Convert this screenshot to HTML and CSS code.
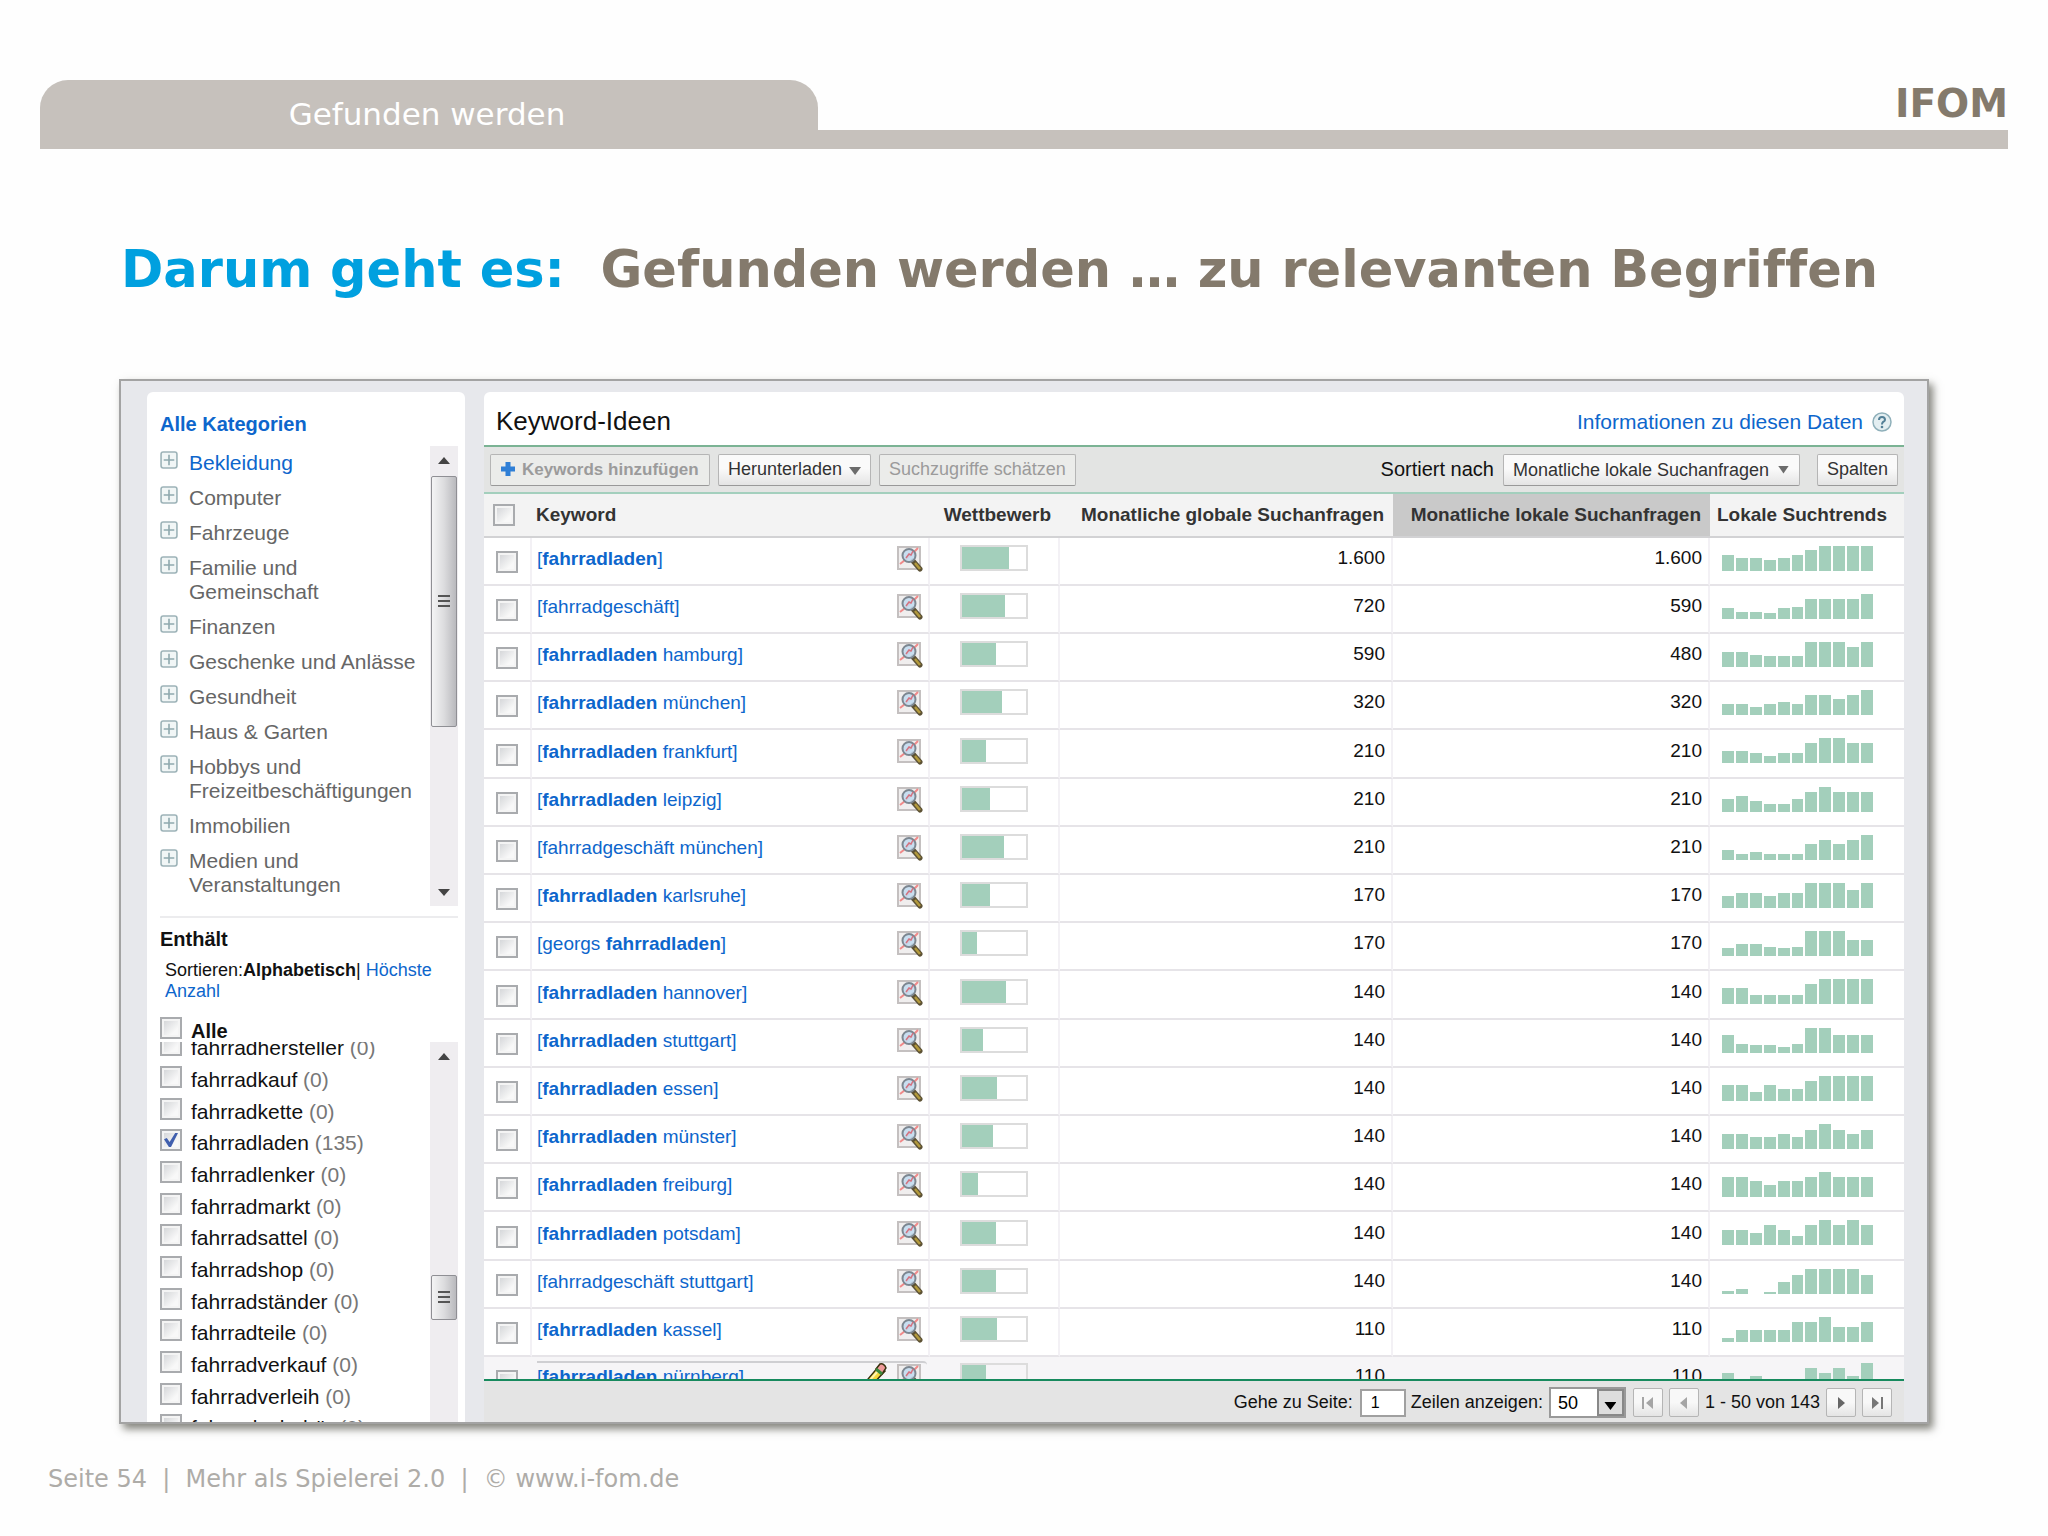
FILE: index.html
```html
<!DOCTYPE html>
<html lang="de">
<head>
    <meta charset="UTF-8">
    <meta name="viewport" content="width=device-width, initial-scale=1.0">
    <title>Gefunden werden</title>
    <link rel="stylesheet" href="styles.css">
</head>
<body>
    <!-- Icons -->
    <svg class="hidden" aria-hidden="true">
        <symbol id="plusBox" viewBox="0 0 17 17">
            <rect x="1" y="1" width="15" height="15" rx="2" fill="#f1f6f6" stroke="#9db3b8" stroke-width="1.5"/>
            <path d="M8.5 3.5v10M3.5 8.5h10" stroke="#8fa9ae" stroke-width="1.5"/>
        </symbol>
        <symbol id="magnifier" viewBox="0 0 26 26">
            <rect x="1" y="1" width="22" height="22" fill="#f0eeee" stroke="#c4c0c0" stroke-width="2"/>
            <path d="M3 18L8 14L14 9L21 2" fill="none" stroke="#f08a8a" stroke-width="2"/>
            <path d="M16 15l7 8" stroke="#5d5235" stroke-width="5" stroke-linecap="round"/>
            <path d="M18 17l5 6" stroke="#b39a3c" stroke-width="2.5"/>
            <circle cx="12" cy="9.5" r="6.5" fill="#c3dbf0" fill-opacity="0.9" stroke="#7d8791" stroke-width="2"/>
            <path d="M9 12l3-4 2 1 2-4" fill="none" stroke="#d4727f" stroke-width="1.5"/>
        </symbol>
        <symbol id="pencil" viewBox="0 0 22 24">
            <path d="M1 23L3 16L14 3L20 8L8 21z" fill="#f6d93c" stroke="#3a3110" stroke-width="1.5"/>
            <path d="M5 17l8-9" stroke="#fff6b0" stroke-width="2"/>
            <path d="M11 6L15 1Q19 0 21 5L17 11z" fill="#ef9a9a" stroke="#3a3110" stroke-width="1.5"/>
            <path d="M11 6l6 5" stroke="#3c8a3e" stroke-width="3"/>
        </symbol>
    </svg>

    <header class="header">
        <div class="tab">Gefunden werden</div>
        <div class="logo">IFOM</div>
    </header>

    <main class="main">
        <h1 class="title"><span class="title-blue">Darum geht es:</span>  Gefunden werden … zu relevanten Begriffen</h1>

        <div class="frame">
            <!-- Linke Spalte -->
            <aside class="sidebar">
                <h2><a href="#">Alle Kategorien</a></h2>
                <div class="scroll-area">
                    <ul class="categories" id="categories"></ul>
                    <div class="scrollbar">
                        <span class="arrow-up"></span>
                        <span class="thumb thumb-long"><i></i></span>
                        <span class="spacer"></span>
                        <span class="arrow-down"></span>
                    </div>
                </div>
                <hr>
                <h2>Enthält</h2>
                <p class="sort">Sortieren:<b>Alphabetisch</b>| <a href="#">Höchste Anzahl</a></p>
                <label class="term term-all"><input type="checkbox"><b>Alle</b></label>
                <div class="scroll-area scroll-terms">
                    <ul class="terms" id="terms"></ul>
                    <div class="scrollbar">
                        <span class="arrow-up"></span>
                        <span class="spacer spacer-double"></span>
                        <span class="thumb thumb-short"><i></i></span>
                        <span class="spacer"></span>
                    </div>
                </div>
            </aside>

            <!-- Keyword-Tabelle -->
            <section class="ideas">
                <div class="ideas-head">
                    <h2>Keyword-Ideen</h2>
                    <a href="#">Informationen zu diesen Daten</a>
                    <svg class="help" viewBox="0 0 20 20" aria-hidden="true">
                        <circle cx="10" cy="10" r="9" fill="#e3eef1" stroke="#8fb0ba" stroke-width="1.5"/>
                        <path d="M7 8Q7 5 10 5T13 8Q13 9 11 10Q10 11 10 12.500" fill="none" stroke="#527f96" stroke-width="2"/>
                        <circle cx="10" cy="15" r="1.3" fill="#527f96"/>
                    </svg>
                </div>
                <div class="toolbar">
                    <button class="btn btn-off btn-add" disabled>
                        <svg class="plus" viewBox="0 0 14 14" aria-hidden="true"><path d="M7 0v14M0 7h14" stroke="#2f7fd6" stroke-width="5"/></svg>
                        Keywords hinzufügen
                    </button>
                    <button class="btn btn-menu">Herunterladen <span class="caret"></span></button>
                    <button class="btn btn-off" disabled>Suchzugriffe schätzen</button>
                    <label class="sort-label" for="sortBy">Sortiert nach</label>
                    <span class="select-wrap">
                        <select class="btn" id="sortBy">
                            <option>Monatliche lokale Suchanfragen</option>
                        </select>
                        <span class="caret"></span>
                    </span>
                    <button class="btn btn-columns">Spalten</button>
                </div>
                <div class="table-view">
                    <table>
                        <thead>
                            <tr>
                                <th class="col-check"><input type="checkbox" aria-label="Alle auswählen"></th>
                                <th class="col-keyword">Keyword</th>
                                <th class="col-comp">Wettbewerb</th>
                                <th class="col-global">Monatliche globale Suchanfragen</th>
                                <th class="col-local">Monatliche lokale Suchanfragen</th>
                                <th class="col-trend">Lokale Suchtrends</th>
                            </tr>
                        </thead>
                        <tbody id="keywords"></tbody>
                    </table>
                </div>
                <div class="pager">
                    <label for="page">Gehe zu Seite:</label>
                    <input type="text" id="page" value="1">
                    <label for="rows">Zeilen anzeigen:</label>
                    <span class="rows-wrap">
                        <select id="rows"><option>50</option></select>
                        <span class="rows-arrow"><span class="caret"></span></span>
                    </span>
                    <button class="btn-page" aria-label="Erste Seite" disabled><svg viewBox="0 0 16 14"><path d="M3 1v12" stroke="#a5a5a5" stroke-width="2"/><path d="M13 1v12L6 7z" fill="#a5a5a5"/></svg></button>
                    <button class="btn-page" aria-label="Vorherige Seite" disabled><svg viewBox="0 0 16 14"><path d="M11 1v12L4 7z" fill="#a5a5a5"/></svg></button>
                    <span class="range">1 - 50 von 143</span>
                    <button class="btn-page" aria-label="Nächste Seite"><svg viewBox="0 0 16 14"><path d="M5 1v12l7-6z" fill="#666"/></svg></button>
                    <button class="btn-page" aria-label="Letzte Seite"><svg viewBox="0 0 16 14"><path d="M3 1v12l7-6z" fill="#777"/><path d="M13 1v12" stroke="#777" stroke-width="2"/></svg></button>
                </div>
            </section>
        </div>
    </main>

    <footer class="footer">Seite 54  |  Mehr als Spielerei 2.0  |  © www.i-fom.de</footer>

    <script src="script.js"></script>
</body>
</html>
```

FILE: styles.css
```css
* {
    box-sizing: border-box;
}
body {
    margin: 0;
    background-color: #fefefe;
    color: #111;
    font-family: "Liberation Sans", Arial, sans-serif;
    font-size: 19px;
}
a {
    color: #0d66cc;
    text-decoration: none;
}
h1, h2, p, ul {
    margin: 0;
    padding: 0;
    list-style: none;
}
.hidden {
    display: none;
}

/* Kopfzeile */
.header {
    display: flex;
    justify-content: space-between;
    margin: 80px 40px 0;
    border-bottom: 19px solid #c6c1bc;
}
.tab {
    width: 778px;
    height: 50px;
    padding-top: 14px;
    padding-right: 4px;
    border-radius: 28px 28px 0 0;
    background-color: #c6c1bc;
    color: #fff;
    font: 31px/40px "DejaVu Sans", Verdana, sans-serif;
    text-align: center;
}
.logo {
    color: #847a6c;
    font: bold 39px/48px "DejaVu Sans", Verdana, sans-serif;
}
.title {
    margin: 89px 0 77px;
    padding-left: 2px;
    color: #847a6c;
    font: bold 51px/64px "DejaVu Sans", Verdana, sans-serif;
    font-variant-ligatures: none;
    white-space: pre;
}
.title-blue {
    color: #00a0df;
}
.main {
    margin: 0 119px;
}

/* Rahmen */
.frame {
    display: flex;
    gap: 19px;
    padding: 11px 23px 0 26px;
    border: 2px solid #a3a3a3;
    background-color: #e7e8ec;
    box-shadow: 4px 5px 8px rgba(80, 80, 70, 0.7);
}
.sidebar {
    display: flex;
    flex-direction: column;
    width: 318px;
    padding: 20px 7px 0 13px;
    border-radius: 6px 6px 0 0;
    background-color: #fff;
}
.sidebar h2 {
    font-size: 20px;
    line-height: 25px;
}
.scroll-area {
    display: flex;
    justify-content: space-between;
    height: 460px;
    margin-top: 9px;
    overflow: hidden;
}
.categories {
    font-size: 21px;
    line-height: 24px;
}
.categories li {
    display: flex;
    gap: 11px;
    margin: 5px 0 11px;
}
.categories svg {
    flex: none;
    width: 18px;
    height: 18px;
}
.categories a {
    color: #666;
}
.categories li:first-child a {
    color: #0d66cc;
}
.scrollbar {
    display: flex;
    flex: none;
    flex-direction: column;
    align-items: center;
    width: 28px;
    background-color: #efedf0;
}
.arrow-up, .arrow-down {
    width: 12px;
    height: 7px;
    margin: 11px 0 12px;
    background-color: #444;
    clip-path: polygon(50% 0, 100% 100%, 0 100%);
}
.arrow-down {
    margin: 10px 0;
    clip-path: polygon(0 0, 100% 0, 50% 100%);
}
.spacer {
    flex: 1;
}
.spacer-double {
    flex: 2;
}
.thumb {
    display: flex;
    align-items: center;
    justify-content: center;
    width: 26px;
    border: 1px solid #8f8f94;
    border-radius: 2px;
    background: linear-gradient(to right, #f4f4f5, #dcdcde 50%, #b9b9bd);
}
.thumb i {
    width: 12px;
    height: 14px;
    background: repeating-linear-gradient(#555 0 2px, transparent 2px 5px);
}
.thumb-long {
    height: 251px;
}
.thumb-short {
    height: 45px;
}
.sidebar hr {
    width: 100%;
    height: 2px;
    margin: 10px 0 9px;
    border: 0;
    background-color: #ececee;
}
.sort {
    padding: 8px 20px 0 5px;
    font-size: 18px;
    line-height: 21px;
}
.term {
    display: flex;
    gap: 9px;
    height: 32px;
    font-size: 21px;
    line-height: 32px;
}
.term-all {
    height: 27px;
    margin-top: 13px;
    font-size: 20px;
}
.term span {
    color: #777;
}
.scroll-terms {
    flex: 1 1 0;
    margin-top: 0;
}
.terms {
    margin-top: -10px;
}
.terms li:nth-child(3n) .term {
    height: 31px;
}
input[type="checkbox"] {
    flex: none;
    width: 22px;
    height: 22px;
    margin: 2px 0 0;
    border: 2px solid #a9abae;
    background: linear-gradient(135deg, #cfd1d4, #f8f8f8 70%);
    box-shadow: inset 0 0 0 2px #f4f4f4;
    appearance: none;
}
input[type="checkbox"]:checked::before {
    content: "";
    display: block;
    width: 14px;
    height: 14px;
    margin: 2px;
    background-color: #405fae;
    clip-path: polygon(0 45%, 20% 35%, 40% 65%, 80% 0, 100% 0, 50% 100%, 35% 100%);
}

/* Keyword-Ideen */
.ideas {
    flex: 1;
    min-width: 0;
    border-radius: 6px 6px 0 0;
    background-color: #fff;
}
.ideas-head {
    display: flex;
    align-items: center;
    gap: 9px;
    height: 53px;
    padding: 6px 12px 0;
    font-size: 21px;
}
.ideas-head h2 {
    margin-right: auto;
    font-size: 26px;
    font-weight: normal;
}
.help {
    width: 20px;
    height: 20px;
}
.toolbar {
    display: flex;
    align-items: center;
    height: 49px;
    padding: 0 6px;
    border-top: 2px solid #7bb394;
    border-bottom: 2px solid #a3cfbd;
    background-color: #e3e4e3;
}
.btn {
    height: 32px;
    margin-right: 8px;
    padding: 0 9px;
    border: 1px solid #b5b5b5;
    border-bottom-color: #999;
    border-radius: 2px;
    background: linear-gradient(#fafafa 45%, #e4e4e4);
    color: #333;
    font-family: inherit;
    font-size: 18px;
    white-space: nowrap;
}
.btn-off {
    background: #ebecea;
    color: #9b9b9b;
}
.btn-add {
    width: 220px;
    font-size: 17px;
    font-weight: bold;
}
.plus {
    width: 14px;
    height: 14px;
    margin-right: 2px;
    vertical-align: -1px;
}
.caret {
    display: inline-block;
    width: 12px;
    height: 8px;
    background-color: #6c6c6c;
    clip-path: polygon(0 0, 100% 0, 50% 100%);
}
.btn-menu .caret {
    margin-left: 2px;
}
.sort-label {
    margin-left: auto;
    margin-right: 9px;
    font-size: 20px;
}
.select-wrap, .rows-wrap {
    position: relative;
}
.select-wrap select {
    width: 297px;
    margin-right: 17px;
    appearance: none;
}
.select-wrap .caret {
    position: absolute;
    top: 12px;
    right: 28px;
    width: 11px;
}
.btn-columns {
    margin-right: 0;
}

/* Tabelle */
.table-view {
    height: 885px;
    overflow: hidden;
}
table {
    width: 100%;
    border-collapse: separate;
    border-spacing: 0;
    table-layout: fixed;
}
th {
    height: 44px;
    padding: 0 9px;
    border-bottom: 2px solid #d2d2d4;
    background-color: #f3f3f3;
    color: #333;
    text-align: right;
    white-space: nowrap;
}
th.col-keyword {
    padding-left: 4px;
    text-align: left;
}
th.col-local {
    background-color: #c9c9c9;
}
th.col-trend {
    padding: 0 0 0 7px;
    text-align: left;
}
.col-check {
    width: 48px;
}
.col-comp {
    width: 130px;
}
.col-global {
    width: 333px;
}
.col-local {
    width: 317px;
}
.col-trend {
    width: 194px;
}
th.col-check input, td.check input {
    display: block;
    margin: 0;
}
td {
    height: 48px;
    padding: 0 6px 6px;
    border-right: 2px solid #f3f1f5;
    border-bottom: 2px solid #e6e4e8;
    background-color: #fff;
    text-align: right;
}
td:last-child {
    border-right: 0;
}
tr:nth-child(5n) td {
    height: 49px;
}
td.check {
    padding: 2px 12px 0;
}
td.keyword {
    padding: 0 5px 4px;
}
.keyword div {
    display: flex;
    align-items: center;
    justify-content: space-between;
}
.keyword svg {
    width: 26px;
    height: 26px;
}
.comp-box {
    width: 68px;
    height: 26px;
    margin-left: 24px;
    border: 2px solid #dcdcdc;
}
.comp-fill {
    height: 100%;
    background-color: #a3cfbb;
}
.trend {
    display: flex;
    align-items: flex-end;
    gap: 2px;
    width: 151px;
    height: 25px;
    margin-left: 6px;
}
.trend span {
    flex: 1;
    background-color: #a3cfbb;
}
.active td {
    padding-bottom: 9px;
    border-right-color: #f6f5f7;
    background-color: #f6f5f7;
}
.active td.check {
    padding-bottom: 0;
}
.active .keyword div {
    margin-right: -4px;
    padding-right: 4px;
    border-top: 2px solid #cfcfd2;
    border-radius: 0 4px 0 0;
}
.active .keyword .pencil {
    width: 22px;
    height: 24px;
    margin: 0 10px 4px auto;
}

/* Seitenauswahl */
.pager {
    display: flex;
    align-items: center;
    justify-content: flex-end;
    height: 43px;
    padding: 2px 12px 0;
    border-top: 2px solid #178a5e;
    background-color: #e4e4e4;
    font-size: 18px;
}
.pager input {
    width: 46px;
    height: 28px;
    margin: 0 5px 0 7px;
    padding: 0 9px;
    border: 2px solid #a0a0a0;
    background-color: #fff;
    font: 16px "Liberation Sans", Arial, sans-serif;
}
.rows-wrap select {
    width: 77px;
    height: 31px;
    margin: 0 7px 0 6px;
    padding: 0 7px;
    border: 2px solid #999;
    background-color: #fff;
    font: 18px "Liberation Sans", Arial, sans-serif;
    appearance: none;
}
.rows-arrow {
    position: absolute;
    top: 2px;
    right: 9px;
    display: flex;
    align-items: flex-end;
    justify-content: center;
    width: 27px;
    height: 27px;
    padding-bottom: 4px;
    border: 2px solid #888;
    background-color: #ddd;
}
.rows-arrow .caret {
    background-color: #000;
}
.btn-page {
    display: flex;
    align-items: center;
    justify-content: center;
    width: 30px;
    height: 29px;
    margin-right: 6px;
    padding: 0;
    border: 1px solid #b5b5b5;
    border-radius: 2px;
    background: linear-gradient(#f8f8f8 50%, #e4e4e4);
}
.btn-page:last-child {
    margin-right: 0;
}
.btn-page svg {
    width: 16px;
    height: 14px;
}
.range {
    margin-right: 6px;
}

.footer {
    margin: 41px 48px 0;
    color: #aeaca8;
    font: 24px/28px "DejaVu Sans", Verdana, sans-serif;
    white-space: pre;
}
```

FILE: script.js
```js
const categories = [
    'Bekleidung', 'Computer', 'Fahrzeuge', 'Familie und<br>Gemeinschaft', 'Finanzen',
    'Geschenke und Anlässe', 'Gesundheit', 'Haus &amp; Garten',
    'Hobbys und<br>Freizeitbeschäftigungen', 'Immobilien', 'Medien und<br>Veranstaltungen'
];

const terms = [
    ['hersteller', 0], ['kauf', 0], ['kette', 0], ['laden', 135], ['lenker', 0],
    ['markt', 0], ['sattel', 0], ['shop', 0], ['ständer', 0], ['teile', 0],
    ['verkauf', 0], ['verleih', 0], ['zubehör', 0]
];

// Keyword, Wettbewerb in %, global, lokal, Suchtrend (Höhen der Balken)
const keywords = [
    ['<b>fahrradladen</b>', 73, '1.600', '1.600', [16, 13, 13, 11, 13, 16, 21, 25, 25, 25, 25]],
    ['fahrradgeschäft', 67, '720', '590', [11, 7, 7, 6, 11, 12, 20, 20, 20, 20, 25]],
    ['<b>fahrradladen</b> hamburg', 53, '590', '480', [15, 15, 12, 11, 11, 11, 25, 25, 25, 20, 25]],
    ['<b>fahrradladen</b> münchen', 62, '320', '320', [11, 11, 8, 11, 13, 11, 20, 20, 16, 20, 25]],
    ['<b>fahrradladen</b> frankfurt', 37, '210', '210', [12, 12, 10, 7, 10, 10, 20, 25, 25, 20, 20]],
    ['<b>fahrradladen</b> leipzig', 43, '210', '210', [13, 16, 11, 8, 8, 13, 20, 25, 20, 20, 20]],
    ['fahrradgeschäft münchen', 65, '210', '210', [10, 6, 8, 6, 6, 6, 16, 20, 16, 20, 25]],
    ['<b>fahrradladen</b> karlsruhe', 43, '170', '170', [12, 15, 15, 12, 15, 15, 25, 25, 25, 18, 25]],
    ['georgs <b>fahrradladen</b>', 23, '170', '170', [8, 12, 12, 9, 8, 9, 25, 25, 25, 16, 16]],
    ['<b>fahrradladen</b> hannover', 69, '140', '140', [16, 16, 9, 9, 9, 9, 20, 25, 25, 25, 25]],
    ['<b>fahrradladen</b> stuttgart', 33, '140', '140', [18, 9, 8, 8, 6, 9, 25, 25, 18, 18, 18]],
    ['<b>fahrradladen</b> essen', 54, '140', '140', [16, 16, 9, 16, 12, 12, 20, 25, 25, 25, 25]],
    ['<b>fahrradladen</b> münster', 48, '140', '140', [15, 15, 12, 12, 15, 12, 19, 25, 19, 15, 19]],
    ['<b>fahrradladen</b> freiburg', 25, '140', '140', [20, 20, 16, 12, 16, 16, 20, 25, 20, 20, 20]],
    ['<b>fahrradladen</b> potsdam', 53, '140', '140', [15, 15, 12, 20, 15, 9, 20, 25, 20, 25, 20]],
    ['fahrradgeschäft stuttgart', 53, '140', '140', [3, 5, 0, 2, 12, 19, 25, 25, 25, 25, 19]],
    ['<b>fahrradladen</b> kassel', 54, '110', '110', [4, 12, 12, 12, 12, 20, 20, 25, 15, 15, 20]],
    ['<b>fahrradladen</b> nürnberg', 38, '110', '110', [15, 0, 12, 0, 0, 0, 20, 15, 20, 12, 25]]
];

document.getElementById('categories').innerHTML = categories.map(name => `
    <li><svg><use href="#plusBox"/></svg><a href="#">${name}</a></li>`).join('');

document.getElementById('terms').innerHTML = terms.map(([name, count]) => `
    <li><label class="term"><input type="checkbox" ${count ? 'checked' : ''}>
        <div>fahrrad${name} <span>(${count})</span></div></label></li>`).join('');

document.getElementById('keywords').innerHTML = keywords.map(([name, comp, global, local, trend], i) => {
    const last = i === keywords.length - 1;
    return `
    <tr class="${last ? 'active' : ''}">
        <td class="check"><input type="checkbox" aria-label="Keyword auswählen"></td>
        <td class="keyword"><div><a href="#">[${name}]</a>
            ${last ? '<svg class="pencil"><use href="#pencil"/></svg>' : ''}
            <svg><use href="#magnifier"/></svg></div></td>
        <td><div class="comp-box"><div class="comp-fill" style="width: ${comp}%"></div></div></td>
        <td>${global}</td>
        <td>${local}</td>
        <td><div class="trend">${trend.map(h => `<span style="height: ${h}px"></span>`).join('')}</div></td>
    </tr>`;
}).join('');
```
